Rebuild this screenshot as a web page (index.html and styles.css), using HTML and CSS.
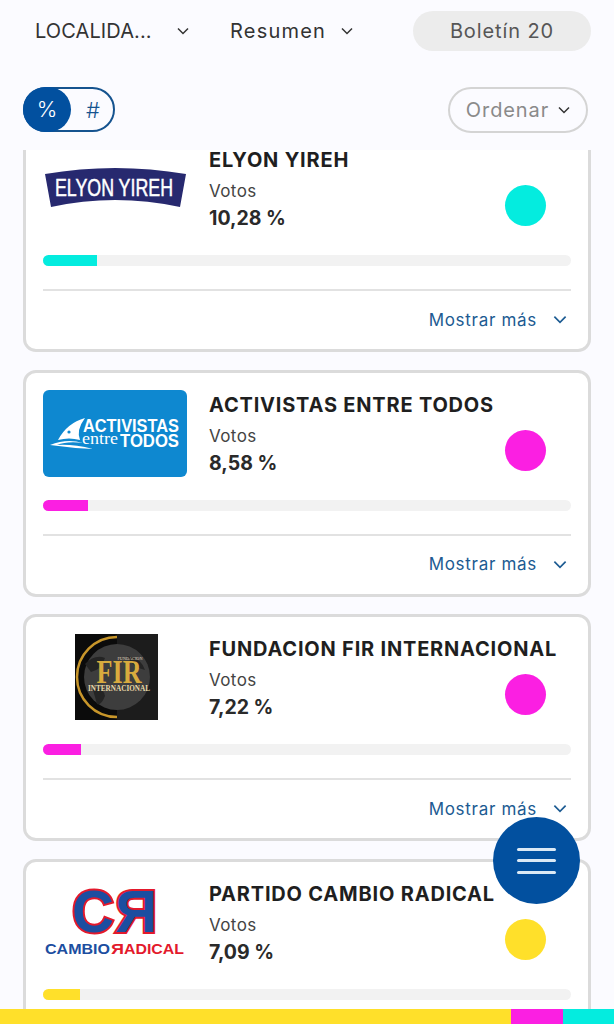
FILE: index.html
```html
<!DOCTYPE html>
<html lang="es">
<head>
	<meta charset="UTF-8">
	<title>Resultados Boletín 20</title>
	<link rel="stylesheet" href="styles.css">
</head>
<body>

<div class="page">
	<div class="top-bar">
		<div class="select select-place">
			<span class="select-label">LOCALIDA...</span>
			<svg class="chevron" viewBox="0 0 12 8"><path d="M1 1.5 L6 6.5 L11 1.5"/></svg>
		</div>
		<div class="select select-view">
			<span class="select-label">Resumen</span>
			<svg class="chevron" viewBox="0 0 12 8"><path d="M1 1.5 L6 6.5 L11 1.5"/></svg>
		</div>
		<div class="bulletin">Boletín 20</div>
	</div>

	<div class="tools">
		<div class="toggle">
			<span class="toggle-on">%</span>
			<span class="toggle-off">#</span>
		</div>
		<div class="sort">
			<span>Ordenar</span>
			<svg class="chevron" viewBox="0 0 12 8"><path d="M1 1.5 L6 6.5 L11 1.5"/></svg>
		</div>
	</div>

	<div class="list">
		<div class="card card-first">
			<div class="card-top">
				<div class="logo">
					<svg viewBox="0 0 144 87" width="144" height="87">
						<path d="M2 29 Q72 17 143 29 L137 62 Q72 48 8 62 Z" fill="#27296f"/>
						<text x="71" y="51" class="logo-elyon" textLength="118" lengthAdjust="spacingAndGlyphs">ELYON YIREH</text>
					</svg>
				</div>
				<div class="info">
					<p class="name">ELYON YIREH</p>
					<p class="votes">Votos</p>
					<p class="percent">10,28 %</p>
				</div>
				<span class="dot dot-cyan"></span>
			</div>
			<div class="bar"><div class="bar-fill dot-cyan" style="width: 10.3%"></div></div>
			<div class="more">
				<span>Mostrar más</span>
				<svg class="chevron" viewBox="0 0 12 8"><path d="M1 1.5 L6 6.5 L11 1.5"/></svg>
			</div>
		</div>

		<div class="card">
			<div class="card-top">
				<div class="logo">
					<svg viewBox="0 0 144 87" width="144" height="87">
						<rect width="144" height="87" rx="6" fill="#0e88d0"/>
						<path d="M42 28 Q24 33 15 50 Q26 47 37 50 Q33 40 42 28 Z" fill="#fff"/>
						<circle cx="26" cy="42" r="1.6" fill="#0e88d0"/>
						<path d="M7 55 Q24 48 40 53 Q24 51 14 55 Q30 54 50 59 Q28 58 7 55 Z" fill="#fff"/>
						<text x="136" y="42" class="logo-act" textLength="96" lengthAdjust="spacingAndGlyphs">ACTIVISTAS</text>
						<text x="39" y="54" class="logo-act-entre" textLength="36" lengthAdjust="spacingAndGlyphs">entre</text>
						<text x="136" y="57" class="logo-act" textLength="59" lengthAdjust="spacingAndGlyphs">TODOS</text>
					</svg>
				</div>
				<div class="info">
					<p class="name">ACTIVISTAS ENTRE TODOS</p>
					<p class="votes">Votos</p>
					<p class="percent">8,58 %</p>
				</div>
				<span class="dot dot-magenta"></span>
			</div>
			<div class="bar"><div class="bar-fill dot-magenta" style="width: 8.6%"></div></div>
			<div class="more">
				<span>Mostrar más</span>
				<svg class="chevron" viewBox="0 0 12 8"><path d="M1 1.5 L6 6.5 L11 1.5"/></svg>
			</div>
		</div>

		<div class="card">
			<div class="card-top">
				<div class="logo">
					<svg viewBox="0 0 144 87" width="144" height="87">
						<rect x="32" y="0" width="83" height="86" fill="#0b0b0b"/>
						<rect x="74" y="0" width="41" height="86" fill="#1c1c1c"/>
						<circle cx="74" cy="43" r="33" fill="#3d3d3d"/>
						<path d="M42 30 Q52 20 62 24 Q58 36 48 38 Z M50 56 Q60 52 62 62 Q58 72 54 70 Z M84 22 Q98 24 102 36 Q90 34 84 22 Z" fill="#242424"/>
						<path d="M74 3 A40 40 0 0 0 74 83" fill="none" stroke="#c8962a" stroke-width="2.5"/>
						<text x="87" y="26" class="logo-fir-small" textLength="25" lengthAdjust="spacingAndGlyphs">FUNDACION</text>
						<text x="76" y="49" class="logo-fir" textLength="45" lengthAdjust="spacingAndGlyphs">FIR</text>
						<text x="76" y="57" class="logo-fir-small logo-fir-bold" textLength="62" lengthAdjust="spacingAndGlyphs">INTERNACIONAL</text>
					</svg>
				</div>
				<div class="info">
					<p class="name">FUNDACION FIR INTERNACIONAL</p>
					<p class="votes">Votos</p>
					<p class="percent">7,22 %</p>
				</div>
				<span class="dot dot-magenta"></span>
			</div>
			<div class="bar"><div class="bar-fill dot-magenta" style="width: 7.2%"></div></div>
			<div class="more">
				<span>Mostrar más</span>
				<svg class="chevron" viewBox="0 0 12 8"><path d="M1 1.5 L6 6.5 L11 1.5"/></svg>
			</div>
		</div>

		<div class="card">
			<div class="card-top">
				<div class="logo">
					<svg viewBox="0 0 144 87" width="144" height="87">
						<text x="29" y="53" class="logo-cr" textLength="42" lengthAdjust="spacingAndGlyphs">C</text>
						<text x="-114" y="53" class="logo-cr" transform="scale(-1 1)" textLength="42" lengthAdjust="spacingAndGlyphs">R</text>
						<text x="2" y="75" class="logo-cambio" textLength="65" lengthAdjust="spacingAndGlyphs">CAMBIO</text>
						<text x="-81" y="75" class="logo-radical" transform="scale(-1 1)" textLength="13" lengthAdjust="spacingAndGlyphs">R</text>
						<text x="81" y="75" class="logo-radical" textLength="60" lengthAdjust="spacingAndGlyphs">ADICAL</text>
					</svg>
				</div>
				<div class="info">
					<p class="name">PARTIDO CAMBIO RADICAL</p>
					<p class="votes">Votos</p>
					<p class="percent">7,09 %</p>
				</div>
				<span class="dot dot-yellow"></span>
			</div>
			<div class="bar"><div class="bar-fill dot-yellow" style="width: 7.1%"></div></div>
		</div>
	</div>

	<div class="strip">
		<div class="strip-yellow"></div>
		<div class="strip-magenta"></div>
		<div class="strip-cyan"></div>
	</div>

	<button class="fab">
		<span></span>
		<span></span>
		<span></span>
	</button>
</div>

</body>
</html>
```
FILE: styles.css
```css
body {
	margin: 0;
	padding: 0;
	background: #fbfbff;
	font-family: "Inter", "Open Sans", sans-serif;
	color: #2a2a2a;
}

p {
	margin: 0;
	padding: 0;
}

.page {
	position: relative;
	display: flex;
	flex-direction: column;
	height: 1024px;
	overflow: hidden;
}

.chevron {
	width: 12px;
	height: 8px;
	fill: none;
	stroke: #333;
	stroke-width: 1.5;
}

.top-bar {
	display: flex;
	align-items: center;
	height: 40px;
	padding: 11px 23px 0 35px;
}

.select {
	display: flex;
	align-items: center;
	font-size: 20px;
	color: #333;
	font-weight: 400;
}

.select-place {
	width: 195px;
	letter-spacing: 0.1px;
}

.select-place .select-label {
	width: 142px;
}

.select-view {
	flex: 1;
	letter-spacing: 1.2px;
}

.select-view .select-label {
	width: 111px;
}

.bulletin {
	width: 178px;
	height: 40px;
	line-height: 40px;
	text-align: center;
	border-radius: 20px;
	background: #ececec;
	color: #565656;
	font-size: 20px;
	letter-spacing: 0.9px;
}

.tools {
	display: flex;
	justify-content: space-between;
	align-items: center;
	height: 45px;
	padding: 36px 26px 18px 23px;
}

.toggle {
	display: flex;
	align-items: center;
	width: 88px;
	height: 41px;
	border: 2px solid #15538f;
	border-radius: 23px;
	font-size: 22px;
	font-weight: 300;
	color: #15538f;
}

.toggle-on {
	width: 48px;
	height: 45px;
	margin-left: -2px;
	line-height: 45px;
	text-align: center;
	border-radius: 23px;
	background: #02509f;
	color: #fff;
}

.toggle-off {
	flex: 1;
	padding-left: 2px;
	text-align: center;
}

.sort {
	display: flex;
	align-items: center;
	justify-content: center;
	gap: 9px;
	width: 136px;
	height: 42px;
	border: 2px solid #d4d4d4;
	border-radius: 23px;
	font-size: 20px;
	letter-spacing: 0.9px;
	color: #8a8a8a;
}

.list {
	flex: 1;
	min-height: 0;
	overflow: hidden;
	padding: 0 23px;
}

.card {
	box-sizing: border-box;
	height: 227px;
	margin-bottom: 17.7px;
	padding: 17px 17px 0;
	background: #fff;
	border: 3px solid #dbdbdb;
	border-radius: 13px;
}

.card-first {
	margin-top: -25px;
}

.card-top {
	display: flex;
	align-items: center;
	height: 87px;
}

.logo {
	flex: none;
	width: 144px;
	height: 87px;
}

.logo svg {
	display: block;
}

.info {
	flex: 1;
	min-width: 0;
	margin-left: 22px;
	align-self: flex-start;
	white-space: nowrap;
}

.name {
	margin-top: 2px;
	font-size: 20px;
	line-height: 26px;
	letter-spacing: 0.8px;
	font-weight: 700;
	color: #1f1f1f;
}

.votes {
	margin-top: 5px;
	font-size: 17px;
	line-height: 26px;
	letter-spacing: 0.4px;
	color: #444;
}

.percent {
	margin-top: 1px;
	font-size: 19.5px;
	line-height: 26px;
	font-weight: 700;
	color: #2a2a2a;
}

.dot {
	flex: none;
	width: 41px;
	height: 41px;
	margin-top: 34px;
	margin-right: 25px;
	border-radius: 50%;
}

.dot-cyan {
	background: #04ecdf;
}

.dot-magenta {
	background: #fb1fe2;
}

.dot-yellow {
	background: #ffe02a;
}

.bar {
	height: 11px;
	margin-top: 23px;
	border-radius: 6px;
	background: #f2f2f2;
	overflow: hidden;
}

.bar-fill {
	height: 100%;
}

.more {
	display: flex;
	justify-content: flex-end;
	align-items: center;
	gap: 16px;
	height: 57px;
	margin-top: 23px;
	padding-right: 4px;
	border-top: 2px solid #e2e2e2;
	font-size: 17px;
	letter-spacing: 0.7px;
	color: #1c5b92;
}

.more .chevron {
	width: 14px;
	height: 9px;
	stroke: #1c5b92;
}

.strip {
	display: flex;
	flex: none;
	height: 15px;
}

.strip-yellow {
	width: 511px;
	background: #ffe02a;
}

.strip-magenta {
	width: 52px;
	background: #fb1fe2;
}

.strip-cyan {
	flex: 1;
	background: #04ecdf;
}

.fab {
	position: absolute;
	left: 493px;
	top: 817px;
	display: flex;
	flex-direction: column;
	justify-content: center;
	gap: 8.5px;
	align-items: center;
	width: 87px;
	height: 87px;
	padding: 0;
	border: 0;
	border-radius: 50%;
	background: #02509f;
}

.fab span {
	display: block;
	width: 39px;
	height: 3px;
	border-radius: 2px;
	background: #dbe9f5;
}

.logo-elyon {
	font-family: "Liberation Sans", sans-serif;
	font-size: 24px;
	fill: #fff;
	stroke: #fff;
	stroke-width: 0.5;
	text-anchor: middle;
}

.logo-act {
	font-family: "Liberation Sans", sans-serif;
	font-size: 18px;
	font-weight: 700;
	fill: #fff;
	text-anchor: end;
}

.logo-act-entre {
	font-family: "Liberation Serif", serif;
	font-size: 16px;
	fill: #fff;
}

.logo-fir {
	font-family: "Liberation Serif", serif;
	font-size: 34px;
	font-weight: 700;
	fill: #d9ab3e;
	text-anchor: middle;
}

.logo-fir-small {
	font-family: "Liberation Serif", serif;
	font-size: 5px;
	fill: #e0d7c0;
	text-anchor: middle;
}

.logo-fir-bold {
	font-size: 8px;
	font-weight: 700;
	fill: #e8d9a8;
}

.logo-cr {
	font-family: "Liberation Sans", sans-serif;
	font-size: 60px;
	font-weight: 700;
	fill: #1c4ea0;
	stroke: #e3192c;
	stroke-width: 4;
	paint-order: stroke;
}

.logo-cambio {
	font-family: "Liberation Sans", sans-serif;
	font-size: 15.5px;
	font-weight: 700;
	fill: #1c4ea0;
}

.logo-radical {
	font-family: "Liberation Sans", sans-serif;
	font-size: 15.5px;
	font-weight: 700;
	fill: #e3192c;
}
```
